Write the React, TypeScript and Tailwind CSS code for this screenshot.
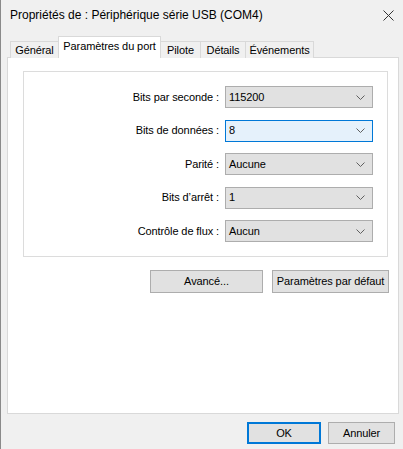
import React from "react";

function Chevron() {
  return (
    <svg width="9" height="5" viewBox="0 0 9 5" className="shrink-0">
      <polyline points="0.5,0.5 4.5,4.5 8.5,0.5" fill="none" stroke="#606060" strokeWidth="1" />
    </svg>
  );
}

function Select({ value, focused }: { value: string; focused?: boolean }) {
  return (
    <div
      className={
        focused
          ? "flex h-[22px] w-[148px] items-center justify-between border border-[#0078d7] bg-[#e5f1fb] pl-[3px] pr-[7px]"
          : "flex h-[22px] w-[148px] items-center justify-between border border-[#adadad] bg-[#e1e1e1] pl-[3px] pr-[7px]"
      }
    >
      <span className="leading-none">{value}</span>
      <Chevron />
    </div>
  );
}

const rows = [
  { label: "Bits par seconde :", value: "115200" },
  { label: "Bits de données :", value: "8", focused: true },
  { label: "Parité :", value: "Aucune" },
  { label: "Bits d\u2019arrêt :", value: "1" },
  { label: "Contrôle de flux :", value: "Aucun" },
];

export default function App() {
  return (
    <div
      className="relative h-[449px] w-[403px] overflow-hidden whitespace-nowrap border-l border-[#8a8a8a] bg-[#f0f0f0] text-[11px] tracking-[-0.1px] text-black"
      style={{ fontFamily: '"Liberation Sans", Arial, sans-serif' }}
    >
      {/* title bar */}
      <div className="flex h-[30px] items-center justify-between pl-[9px] pr-[9px]">
        <span className="text-[12px] tracking-normal">Propriétés de : Périphérique série USB (COM4)</span>
        <svg width="11" height="11" viewBox="0 0 11 11">
          <path d="M0.5 0.5 L10.5 10.5 M10.5 0.5 L0.5 10.5" stroke="#333" strokeWidth="1" />
        </svg>
      </div>

      {/* tabs */}
      <div className="flex h-[27px] items-end pl-[9px]">
        <div className="mb-[-1px] flex h-[17px] w-[48px] items-center justify-center border border-r-0 border-b-0 border-[#d9d9d9] bg-[#f0f0f0]">
          Général
        </div>
        <div className="relative z-10 mb-[-1px] flex h-[22px] w-[103px] items-center justify-center border border-b-0 border-[#d9d9d9] bg-white pb-[3px]">
          Paramètres du port
        </div>
        <div className="mb-[-1px] flex h-[17px] w-[40px] items-center justify-center border border-l-0 border-b-0 border-[#d9d9d9] bg-[#f0f0f0]">
          Pilote
        </div>
        <div className="mb-[-1px] flex h-[17px] w-[45px] items-center justify-center border border-l-0 border-b-0 border-[#d9d9d9] bg-[#f0f0f0]">
          Détails
        </div>
        <div className="mb-[-1px] flex h-[17px] w-[68px] items-center justify-center border border-l-0 border-b-0 border-[#d9d9d9] bg-[#f0f0f0]">
          Événements
        </div>
      </div>

      {/* panel */}
      <div className="ml-[6px] flex h-[357px] w-[392px] flex-col border border-[#d9d9d9] bg-white pl-[15px] pr-[10px] pt-[13px]">
        <div className="flex h-[186px] w-[365px] flex-col gap-[11.5px] border border-[#dcdcdc] pt-[14px]">
          {rows.map((r) => (
            <div key={r.label} className="flex items-center">
              <div className="w-[201px] pr-[6px] text-right">{r.label}</div>
              <Select value={r.value} focused={r.focused} />
            </div>
          ))}
        </div>
        <div className="mt-[13px] flex w-[366px] justify-end gap-[9px]">
          <div className="flex h-[23px] w-[113px] items-center justify-center border border-[#adadad] bg-[#e1e1e1]">
            Avancé...
          </div>
          <div className="flex h-[23px] w-[117px] items-center justify-center border border-[#adadad] bg-[#e1e1e1]">
            Paramètres par défaut
          </div>
        </div>
      </div>

      {/* bottom buttons */}
      <div className="flex justify-end gap-[7px] pr-[8px] pt-[8px]">
        <div className="flex h-[22px] w-[74px] items-center justify-center border-2 border-[#0078d7] bg-[#e1e1e1]">
          OK
        </div>
        <div className="flex h-[22px] w-[67px] items-center justify-center border border-[#adadad] bg-[#e1e1e1]">
          Annuler
        </div>
      </div>
    </div>
  );
}
